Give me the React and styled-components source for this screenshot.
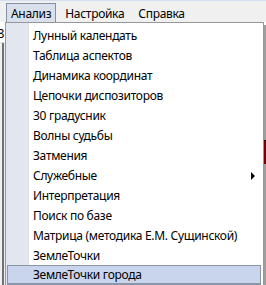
import React from "react";
import styled, { createGlobalStyle } from "styled-components";

const Global = createGlobalStyle`
  html, body { margin: 0; padding: 0; background: #f0f0f0; }
  body {
    font-family: "Noto Sans", "Open Sans", sans-serif;
    font-size: 12px;
    letter-spacing: -0.3px;
    color: #000;
  }
`;

const menuItems = [
  { name: "Лунный календать" },
  { name: "Таблица аспектов" },
  { name: "Динамика координат" },
  { name: "Цепочки диспозиторов" },
  { name: "30 градусник" },
  { name: "Волны судьбы" },
  { name: "Затмения" },
  { name: "Служебные", sub: true },
  { name: "Интерпретация" },
  { name: "Поиск по базе" },
  { name: "Матрица (методика Е.М. Сущинской)" },
  { name: "ЗемлеТочки" },
  { name: "ЗемлеТочки города", active: true },
];

const Page = styled.div`
  position: relative;
  width: 266px;
  height: 285px;
  overflow: hidden;
  display: flex;
  flex-direction: column;
  background: #f0f0f0;
`;

const MenuBar = styled.div`
  height: 21px;
  border-top: 1px solid #d3dfee;
  display: flex;
  align-items: flex-end;
  padding-left: 6px;
  background: #f0f0f0;
`;

const BarItem = styled.div`
  height: 19px;
  box-sizing: border-box;
  display: flex;
  align-items: center;
  padding: 0 ${({ open }) => (open ? "4px" : "6px")};
  margin-right: ${({ open }) => (open ? "2px" : "0")};
  border: 1px solid ${({ open }) => (open ? "#8592a3" : "transparent")};
  border-bottom: none;
  background: ${({ open }) => (open ? "#d8e0eb" : "transparent")};
  line-height: 19px;
`;

const Workspace = styled.div`
  flex: 1;
  display: flex;
  background: #fff;
`;

const LeftEdge = styled.div`
  width: 5px;
  display: flex;
  flex-direction: column;
  overflow: hidden;
`;

const Digit = styled.div`
  height: 18px;
  margin-left: -3px;
  line-height: 18px;
  font-size: 13px;
  padding-top: 2px;
`;

const Frame = styled.div`
  flex: 1;
  border-top: 1px solid #dcdcdc;
  background: linear-gradient(to right, #f0f0f0 0 2px, #707070 2px 4px, #f0f0f0 4px);
`;

const Spacer = styled.div`
  flex: 1;
`;

const RightEdge = styled.div`
  width: 3px;
  display: flex;
  flex-direction: column;
  background: #fff;
`;

const RedBar = styled.div`
  margin-top: 118px;
  height: 23px;
  background: #c00000;
  border-top: 1px solid #300;
`;

const Dropdown = styled.div`
  position: absolute;
  left: 5px;
  top: 22px;
  width: 259px;
  box-sizing: border-box;
  border: 1px solid #979797;
  padding: 2px 2px 2px 1px;
  background: linear-gradient(to right, #e2e6ee 0 22px, #dfe1e4 22px 23px, #fff 23px);
  box-shadow: 3px 3px 0 rgba(0, 0, 0, 0.38);
`;

const Item = styled.div`
  position: relative;
  height: 20px;
  box-sizing: border-box;
  padding-left: 25px;
  display: flex;
  align-items: center;
  border: 1px solid ${({ active }) => (active ? "#8a96a8" : "transparent")};
  border-bottom-width: ${({ active }) => (active ? "2px" : "1px")};
  background: ${({ active }) => (active ? "#c8d5ec" : "transparent")};
  background-clip: padding-box;
  white-space: nowrap;
`;

const Arrow = styled.span`
  position: absolute;
  right: 5px;
  top: 6px;
  width: 0;
  height: 0;
  border-top: 4px solid transparent;
  border-bottom: 4px solid transparent;
  border-left: 4px solid #000;
`;

export default function App() {
  return (
    <>
      <Global />
      <Page>
        <MenuBar>
          <BarItem open>Анализ</BarItem>
          <BarItem>Настройка</BarItem>
          <BarItem>Справка</BarItem>
        </MenuBar>
        <Workspace>
          <LeftEdge>
            <Digit>8</Digit>
            <Frame />
          </LeftEdge>
          <Spacer />
          <RightEdge>
            <RedBar />
          </RightEdge>
        </Workspace>
        <Dropdown>
          {menuItems.map((item) => (
            <Item key={item.name} active={item.active}>
              {item.name}
              {item.sub && <Arrow />}
            </Item>
          ))}
        </Dropdown>
      </Page>
    </>
  );
}
